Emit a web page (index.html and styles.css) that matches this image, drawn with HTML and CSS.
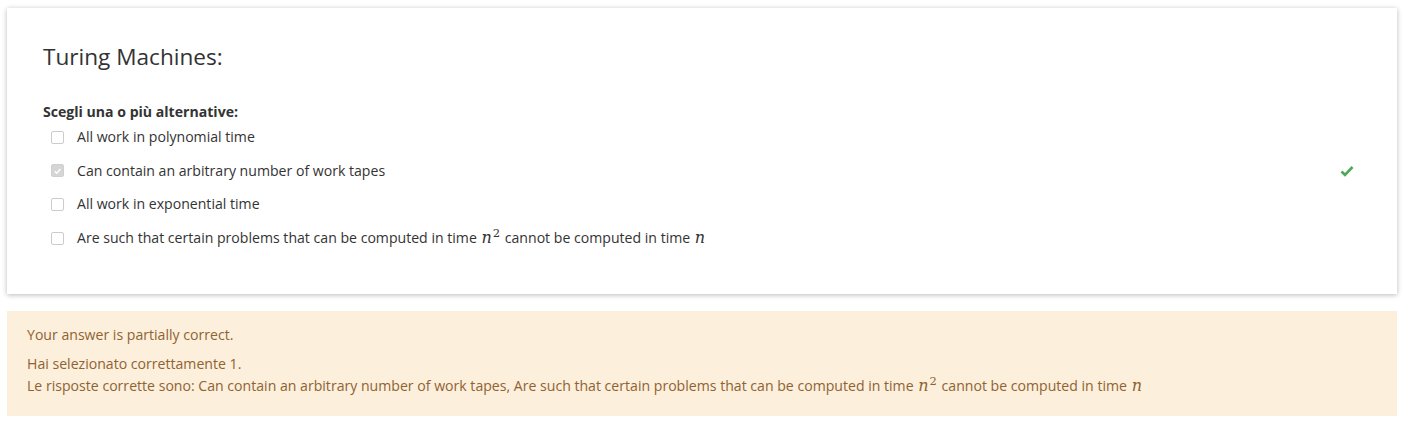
FILE: index.html
```html
<!DOCTYPE html>
<html lang="it">
<head>
<meta charset="utf-8">
<link rel="stylesheet" href="styles.css">
</head>
<body>
<div class="page">
  <section class="card">
    <h2 class="qtext">Turing Machines:</h2>
    <div class="prompt">Scegli una o più alternative:</div>
    <div class="answers">
      <div class="row">
        <span class="box"></span>
        <span class="label">All work in polynomial time</span>
      </div>
      <div class="row">
        <span class="box checked"><svg viewBox="0 0 12 12" width="12" height="12"><path d="M3 6.3 L5.2 8.4 L9.2 3.8" fill="none" stroke="#fff" stroke-width="1.6"/></svg></span>
        <span class="label">Can contain an arbitrary number of work tapes</span>
        <span class="tick"><svg viewBox="0 0 14 12" width="14" height="12"><path d="M1.5 6.5 L5 9.8 L12.5 2" fill="none" stroke="#4fa858" stroke-width="2.6"/></svg></span>
      </div>
      <div class="row">
        <span class="box"></span>
        <span class="label">All work in exponential time</span>
      </div>
      <div class="row">
        <span class="box"></span>
        <span class="label">Are such that certain problems that can be computed in time <span class="m">n<sup>2</sup></span> cannot be computed in time <span class="m">n</span></span>
      </div>
    </div>
  </section>
  <section class="feedback">
    <p class="fb1">Your answer is partially correct.</p>
    <p class="fb2">Hai selezionato correttamente 1.<br>Le risposte corrette sono: Can contain an arbitrary number of work tapes, Are such that certain problems that can be computed in time <span class="m">n<sup>2</sup></span> cannot be computed in time <span class="m">n</span></p>
  </section>
</div>
</body>
</html>
```
FILE: styles.css
```css
* { box-sizing: border-box; }
html, body { margin: 0; padding: 0; background: #fff; }
body {
  font-family: "Open Sans", "Noto Sans", sans-serif;
  font-size: 14.1px;
  color: #333;
}
.page {
  padding: 8px 15px 0 7px;
  display: flex;
  flex-direction: column;
  gap: 17px;
}
.card {
  background: #fff;
  box-shadow: 0 1px 5px rgba(0,0,0,0.28);
  padding: 34px 36px 46px 36px;
}
.qtext {
  margin: 0 0 30px 0;
  font-weight: 400;
  font-size: 22.6px;
  line-height: 30px;
  color: #333;
}
.prompt {
  font-weight: 700;
  line-height: 20px;
  margin-bottom: 5px;
}
.answers {
  display: flex;
  flex-direction: column;
  gap: 13.7px;
  padding-left: 8px;
}
.row {
  display: flex;
  align-items: center;
  height: 20px;
  line-height: 20px;
}
.box {
  width: 13px;
  height: 13px;
  border: 1px solid #ccc;
  border-radius: 2px;
  background: #fff;
  margin-right: 13px;
  display: flex;
  align-items: center;
  justify-content: center;
}
.box.checked {
  background: #d5d5d5;
  border-color: #d0d0d0;
}
.box svg { display: block; }
.label { color: #333; }
.tick {
  margin-left: auto;
  margin-right: 7px;
  display: flex;
}
.m {
  font-family: "DejaVu Serif", "Liberation Serif", serif;
  font-style: italic;
  font-size: 16px;
  padding: 0 1px;
}
.m sup {
  font-style: normal;
  font-size: 11.5px;
  line-height: 0;
  vertical-align: 6px;
  margin-left: 1px;
}
.feedback {
  background: #fcefdc;
  color: #8f6331;
  padding: 13px 20px 19px 20px;
  line-height: 22px;
}
.feedback p { margin: 0; }
.fb1 { margin-bottom: 7px !important; }
```
